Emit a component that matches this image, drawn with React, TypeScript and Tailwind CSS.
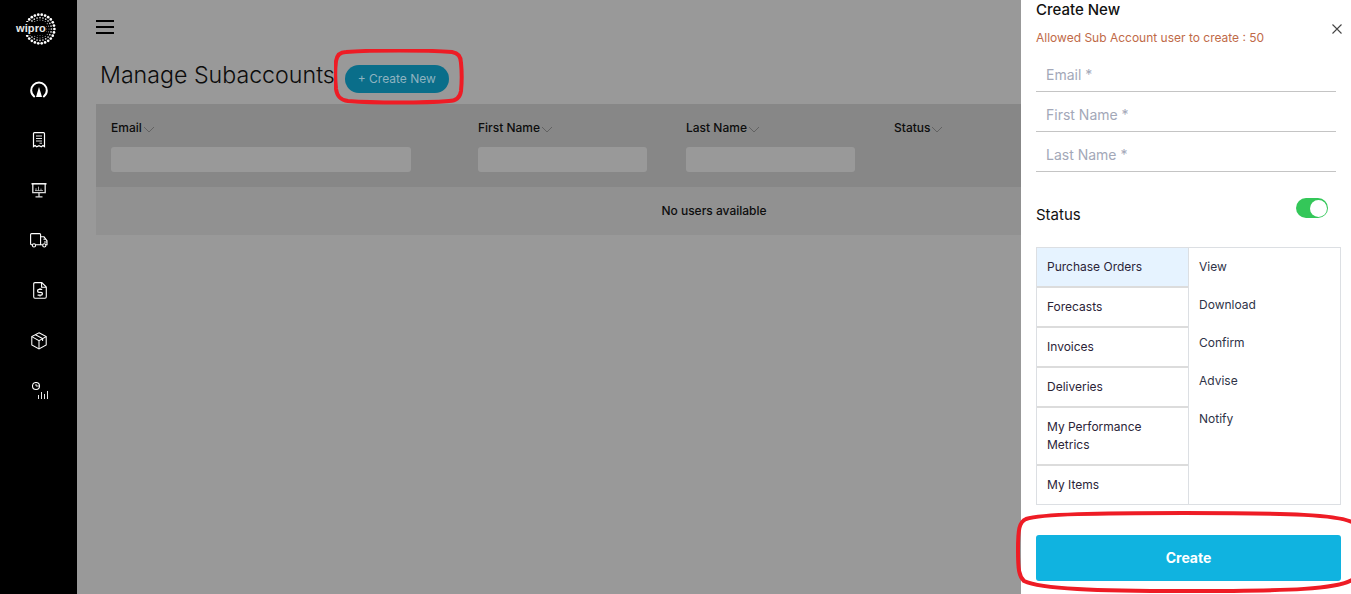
const font = "font-['Inter','Noto_Sans',sans-serif]";

function WiproLogo() {
  const rings: { r: number; n: number; s: number; o: number }[] = [
    { r: 14.4, n: 26, s: 1.35, o: 1 },
    { r: 11.4, n: 24, s: 0.85, o: 0.85 },
    { r: 9, n: 20, s: 0.6, o: 0.65 },
    { r: 6.6, n: 16, s: 0.5, o: 0.55 },
    { r: 4.2, n: 12, s: 0.4, o: 0.45 },
  ];
  return (
    <div className="relative h-[32px] w-[40px]">
      <svg width="32" height="32" viewBox="-16 -16 32 32" className="absolute right-0 top-0">
        {rings.map((ring) =>
          Array.from({ length: ring.n }).map((_, i) => {
            const a = (i / ring.n) * Math.PI * 2;
            return (
              <circle
                key={`${ring.r}-${i}`}
                cx={Math.cos(a) * ring.r}
                cy={Math.sin(a) * ring.r}
                r={ring.s}
                fill="#fff"
                opacity={ring.o}
              />
            );
          }),
        )}
      </svg>
      <span className="absolute left-0 top-[9px] bg-black text-[11px] leading-[13px] font-bold text-[#e8e8e8] font-['Liberation_Sans',sans-serif] tracking-[0.1px]">
        wipro
      </span>
    </div>
  );
}

function Gauge() {
  return (
    <svg width="18" height="18" viewBox="0 0 18 18" fill="none" stroke="#fff" strokeWidth="2">
      <path d="M4.2 15.4 C2 13.6 1.2 11.6 1.2 9.4 A7.8 7.8 0 0 1 16.8 9.4 C16.8 11.6 16 13.6 13.8 15.4" strokeLinecap="round" />
      <path d="M9 6 L12 16 H6 Z" fill="#fff" stroke="none" />
    </svg>
  );
}

function Receipt() {
  return (
    <svg width="14" height="16" viewBox="0 0 14 16" fill="none" stroke="#fff" strokeWidth="1.2">
      <path d="M1.5 14.6 V1.6 Q1.5 0.6 2.5 0.6 H11.5 Q12.5 0.6 12.5 1.6 V14.6 L10.9 13.6 L9.3 14.8 L7 13.6 L4.7 14.8 L3.1 13.6 Z" />
      <path d="M4 4 H10 M4 6.5 H10 M4 9 H10 M7.5 11.2 H10" strokeWidth="0.9" />
    </svg>
  );
}

function Presentation() {
  return (
    <svg width="16" height="15" viewBox="0 0 16 15" fill="none" stroke="#fff" strokeWidth="1.1">
      <path d="M0.5 0.8 H15.5" strokeWidth="1.5" />
      <path d="M1.8 1 V9.6 H14.2 V1" strokeWidth="1.4" opacity="0.85" />
      <path d="M5 7.5 V5.2 M7.5 7.5 V3.6 M10 7.5 V5.6 M4 7.6 H12" strokeWidth="0.8" opacity="0.8" />
      <path d="M8 10 V13.5 M4.5 13.8 H11.5" strokeWidth="1.3" opacity="0.85" />
    </svg>
  );
}

function Truck() {
  return (
    <svg width="18" height="15" viewBox="0 0 18 15" fill="none" stroke="#fff" strokeWidth="1.1">
      <path d="M2.5 11.8 H1.6 Q0.6 11.8 0.6 10.8 V1.6 Q0.6 0.6 1.6 0.6 H9.6 Q10.6 0.6 10.6 1.6 V11.8 H5.4" />
      <path d="M10.6 3.8 H14 L17 7.8 V11.8 H15.8 M12.8 11.8 H10.6" />
      <path d="M13.4 6.2 H15.6 M14 9 H17" strokeWidth="1" />
      <circle cx="4" cy="12.4" r="1.6" />
      <circle cx="14.3" cy="12.4" r="1.6" />
    </svg>
  );
}

function DollarDoc() {
  return (
    <svg width="14" height="17" viewBox="0 0 14 17" fill="none" stroke="#fff" strokeWidth="1.1" className="ml-[2px]">
      <path d="M2 0.6 H8.8 L13.3 5 V14.8 Q13.3 16.2 12 16.2 H2 Q0.7 16.2 0.7 14.8 V2 Q0.7 0.6 2 0.6 Z" />
      <path d="M8.6 0.8 V5.2 H13" />
      <path d="M9.2 7.4 H6 Q4.6 7.4 4.6 8.9 Q4.6 10.3 6 10.3 H8 Q9.4 10.3 9.4 11.8 Q9.4 13.2 8 13.2 H4.6" strokeWidth="1.3" />
      <path d="M7 6.2 V7.4 M7 13.2 V14.4" strokeWidth="1.1" />
    </svg>
  );
}

function Box() {
  return (
    <svg width="16" height="18" viewBox="0 0 16 18" fill="none" stroke="#fff" strokeWidth="1.05" className="ml-[1px]">
      <path d="M8 0.8 L15.2 4.6 V13 L8 17 L0.8 13 V4.6 Z" />
      <path d="M0.8 4.6 L8 8.6 L15.2 4.6 M8 8.6 V17 M4.4 2.7 L11.6 6.6 V9" />
    </svg>
  );
}

function ClockBars() {
  return (
    <svg width="17" height="18" viewBox="0 0 17 18" fill="none" stroke="#fff" className="ml-[3px]">
      <circle cx="4" cy="4" r="3.5" strokeWidth="1.1" />
      <path d="M4 2 V4 H7" strokeWidth="0.9" />
      <path d="M6.5 17 V13 M9.5 17 V10 M12.5 17 V12 M15.5 17 V9" strokeWidth="0.9" />
    </svg>
  );
}

function Sort() {
  return (
    <svg width="12" height="7" viewBox="0 0 12 7" fill="none" stroke="#5d5d5d" strokeWidth="0.9" className="ml-[1px] mt-[2px]">
      <path d="M1 1 L6 6 L11 1" />
    </svg>
  );
}

const sideIcons = [Gauge, Receipt, Presentation, Truck, DollarDoc, Box, ClockBars];

const columns = [
  { label: "Email", width: "w-[367px]", input: "w-[300px]" },
  { label: "First Name", width: "w-[208px]", input: "w-[169px]" },
  { label: "Last Name", width: "w-[208px]", input: "w-[169px]" },
  { label: "Status", width: "w-[200px]", input: "" },
];

const modules = [
  { label: "Purchase Orders", h: "h-[40px]", active: true },
  { label: "Forecasts", h: "h-[40px]" },
  { label: "Invoices", h: "h-[40px]" },
  { label: "Deliveries", h: "h-[40px]" },
  { label: "My Performance Metrics", h: "h-[58px]" },
  { label: "My Items", h: "h-[39px] pb-[1px]", last: true },
];

const permissions = ["View", "Download", "Confirm", "Advise", "Notify"];

function Field({ placeholder }: { placeholder: string }) {
  return (
    <div className="flex h-[40px] items-center border-b border-[#c4c4c4] pl-[10px] pt-[6px] text-[14px] text-[#a3a8b8]">
      {placeholder}
    </div>
  );
}

export default function App() {
  return (
    <div className={`relative flex h-[594px] w-[1351px] overflow-hidden bg-[#999999] ${font}`}>
      <aside className="flex w-[77px] shrink-0 flex-col items-center bg-black">
        <div className="mt-[13px] ml-[-5px] h-[32px]">
          <WiproLogo />
        </div>
        <div className="mt-[20px] flex flex-col items-center">
          {sideIcons.map((Icon, i) => (
            <div key={i} className="flex h-[50.2px] w-[50px] items-center justify-center">
              <Icon />
            </div>
          ))}
        </div>
      </aside>

      <main className="min-w-0 flex-1 pl-[19px]">
        <div className="mt-[20px] flex h-[14px] w-[18px] flex-col justify-between">
          <div className="h-[2px] bg-black" />
          <div className="h-[2px] bg-black" />
          <div className="h-[2px] bg-black" />
        </div>
        <div className="mt-[28px] flex h-[28px] items-start pl-[4px]">
          <h1 className="mt-[-1px] text-[23.2px] leading-[28px] font-light text-[#0c0c0c]">Manage Subaccounts</h1>
          <button className="ml-[10px] mt-[3px] h-[28px] w-[104px] shrink-0 rounded-full bg-[#0a6e8a] text-[12px] text-[#8fb3c0]">
            + Create New
          </button>
        </div>
        <div className="mt-[14px] w-[1236px]">
          <div className="flex h-[83px] bg-[#878787] pl-[15px] pt-[16px]">
            {columns.map((col) => (
              <div key={col.label} className={col.width}>
                <div className="flex h-[16px] items-center text-[12px] font-medium text-[#0d0d0d]">
                  {col.label}
                  <Sort />
                </div>
                {col.input ? <div className={`mt-[11px] h-[25px] rounded-[3px] bg-[#999999] ${col.input}`} /> : null}
              </div>
            ))}
          </div>
          <div className="flex h-[48px] items-center justify-center bg-[#919191] text-[12px] font-medium text-[#0d0d0d]">
            No users available
          </div>
        </div>
      </main>

      <section className="absolute right-0 top-0 h-[594px] w-[330px] bg-white pl-[15px]">
        <div className="pt-[1px] text-[15px] leading-[18px] font-medium text-[#111]">Create New</div>
        <div className="mt-[11px] text-[12px] leading-[16px] text-[#bf6a48]">Allowed Sub Account user to create : 50</div>
        <button className="absolute right-[8px] top-[23px] text-[#444]" aria-label="Close">
          <svg width="12" height="12" viewBox="0 0 12 12" fill="none" stroke="currentColor" strokeWidth="1.1">
            <path d="M1.5 1.5 L10.5 10.5 M10.5 1.5 L1.5 10.5" />
          </svg>
        </button>
        <div className="mt-[6px] w-[300px]">
          <Field placeholder="Email *" />
          <Field placeholder="First Name *" />
          <Field placeholder="Last Name *" />
        </div>
        <div className="mt-[26px] flex h-[20px] w-[292px] items-start justify-between">
          <span className="mt-[8px] text-[15px] leading-[18px] text-[#111]">Status</span>
          <span className="flex h-[20px] w-[32px] items-center justify-end rounded-full bg-[#34c759] pr-[1px]">
            <span className="h-[17px] w-[17px] rounded-full bg-white" />
          </span>
        </div>
        <div className="mt-[29px] flex h-[258px] w-[305px] border border-[#dcdfe3]">
          <div className="w-[152px] shrink-0 border-r border-[#dcdfe3]">
            {modules.map((m) => (
              <div
                key={m.label}
                className={`flex items-center px-[10px] text-[12px] leading-[18px] text-[#2b2438] ${m.h} ${
                  m.last ? "" : "border-b-2 border-[#dcdcdc]"
                } ${m.active ? "bg-[#e6f3ff]" : ""}`}
              >
                {m.label}
              </div>
            ))}
          </div>
          <div className="flex-1 pl-[10px] pt-[10px]">
            {permissions.map((p) => (
              <div key={p} className="h-[38px] text-[12px] leading-[18px] text-[#2f3348]">
                {p}
              </div>
            ))}
          </div>
        </div>
        <button className="mt-[30px] h-[46px] w-[305px] rounded-[3px] bg-[#10b3e0] pb-[1px] text-[14px] font-bold text-white">
          Create
        </button>
      </section>

      <svg width="130" height="56" viewBox="0 0 130 56" fill="none" className="absolute left-[334px] top-[49px]">
        <path
          d="M12 3 C40 1 90 1 118 3 C125 4 127 8 127 14 C128 24 128 32 127 42 C126 49 122 52 115 52 C90 54 40 54 14 52 C6 51 3 47 2 40 C1 30 1 20 2 12 C3 6 6 3 12 3 Z"
          stroke="#ee1c25"
          strokeWidth="4"
        />
      </svg>
      <svg width="337" height="84" viewBox="0 0 337 84" fill="none" className="absolute left-[1016px] top-[510px]">
        <path
          d="M336 12 C320 5 280 3 168 3 C80 3 25 4 10 9 C3 12 2 20 2 40 C2 60 3 66 8 71 C25 79 80 81 168 81 C280 81 320 79 336 70"
          stroke="#ee1c25"
          strokeWidth="4"
        />
      </svg>
    </div>
  );
}
